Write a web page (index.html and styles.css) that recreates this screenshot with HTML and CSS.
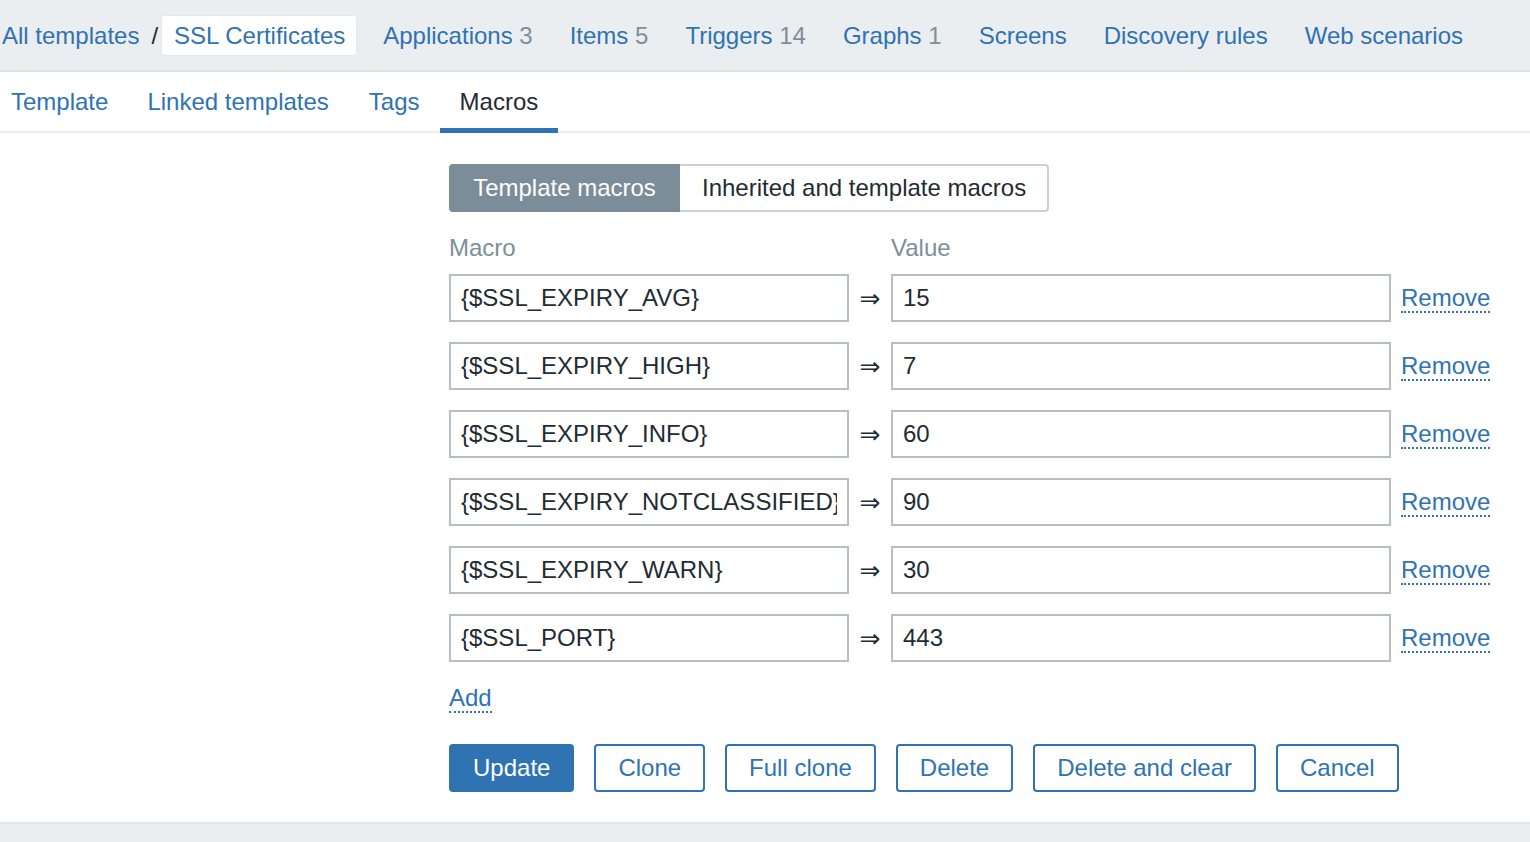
FILE: index.html
```html
<!DOCTYPE html>
<html lang="en">
<head>
<meta charset="utf-8">
<title>Macros</title>
<link rel="stylesheet" href="styles.css">
</head>
<body>
<header class="topnav">
  <div class="crumbs">
    <a class="crumb-link" href="#">All templates</a>
    <span class="crumb-sep">/</span>
    <a class="crumb-box" href="#">SSL Certificates</a>
  </div>
  <nav class="navlinks">
    <a href="#">Applications <span class="count">3</span></a>
    <a href="#">Items <span class="count">5</span></a>
    <a href="#">Triggers <span class="count">14</span></a>
    <a href="#">Graphs <span class="count">1</span></a>
    <a href="#">Screens</a>
    <a href="#">Discovery rules</a>
    <a href="#">Web scenarios</a>
  </nav>
</header>

<div class="tabs">
  <a class="tab first" href="#">Template</a>
  <a class="tab" href="#">Linked templates</a>
  <a class="tab" href="#">Tags</a>
  <a class="tab active" href="#">Macros</a>
</div>

<main class="content">
  <div class="segmented">
    <button class="seg on">Template macros</button>
    <button class="seg">Inherited and template macros</button>
  </div>

  <div class="macros">
    <div class="mrow head">
      <span class="label">Macro</span>
      <span></span>
      <span class="label">Value</span>
    </div>
    <div class="mrow">
      <input class="inp macro" value="{$SSL_EXPIRY_AVG}">
      <span class="arrow">⇒</span>
      <input class="inp value" value="15">
      <a class="dlink" href="#">Remove</a>
    </div>
    <div class="mrow">
      <input class="inp macro" value="{$SSL_EXPIRY_HIGH}">
      <span class="arrow">⇒</span>
      <input class="inp value" value="7">
      <a class="dlink" href="#">Remove</a>
    </div>
    <div class="mrow">
      <input class="inp macro" value="{$SSL_EXPIRY_INFO}">
      <span class="arrow">⇒</span>
      <input class="inp value" value="60">
      <a class="dlink" href="#">Remove</a>
    </div>
    <div class="mrow">
      <input class="inp macro" value="{$SSL_EXPIRY_NOTCLASSIFIED}">
      <span class="arrow">⇒</span>
      <input class="inp value" value="90">
      <a class="dlink" href="#">Remove</a>
    </div>
    <div class="mrow">
      <input class="inp macro" value="{$SSL_EXPIRY_WARN}">
      <span class="arrow">⇒</span>
      <input class="inp value" value="30">
      <a class="dlink" href="#">Remove</a>
    </div>
    <div class="mrow">
      <input class="inp macro" value="{$SSL_PORT}">
      <span class="arrow">⇒</span>
      <input class="inp value" value="443">
      <a class="dlink" href="#">Remove</a>
    </div>
  </div>

  <div class="addline"><a class="dlink" href="#">Add</a></div>

  <div class="actions">
    <button class="btn primary">Update</button>
    <button class="btn">Clone</button>
    <button class="btn">Full clone</button>
    <button class="btn">Delete</button>
    <button class="btn">Delete and clear</button>
    <button class="btn">Cancel</button>
  </div>
</main>

<footer class="footer"></footer>
</body>
</html>
```

FILE: styles.css
```css
* { box-sizing: border-box; }

html, body {
  margin: 0;
  padding: 0;
  background: #ffffff;
  font-family: "Liberation Sans", Arial, sans-serif;
  font-size: 24px;
  color: #1f2c33;
}

a { color: #2f73b3; text-decoration: none; }

.topnav {
  display: flex;
  align-items: center;
  height: 72px;
  background: #ebeef0;
  border-bottom: 2px solid #dfe4e7;
}

.crumbs {
  display: flex;
  align-items: center;
}

.crumb-link { padding: 2px 0 0 2px; line-height: 28px; }

.crumb-sep {
  margin: 0 3px 0 12px;
  padding-top: 2px;
  color: #1f2c33;
}

.crumb-box {
  display: block;
  height: 41px;
  line-height: 40px;
  padding: 0 11px 0 12px;
  background: #ffffff;
  border: 1px solid #e3e7ea;
  border-radius: 3px;
}

.navlinks {
  display: flex;
  gap: 37px;
  margin-left: 26px;
  padding-top: 2px;
}

.count { color: #7d8f99; }

.tabs {
  display: flex;
  height: 61px;
  border-bottom: 2px solid #ebeef0;
}

.tab {
  position: relative;
  display: block;
  padding: 0 20px;
  line-height: 59px;
}

.tab.first { padding: 0 19px 0 11px; }

.tab.active { color: #1f2c33; }

.tab.active::after {
  content: "";
  position: absolute;
  left: 0;
  right: 0;
  bottom: -2px;
  height: 5px;
  background: #2f73b3;
}

.content {
  padding: 31px 0 30px 449px;
}

.segmented {
  display: flex;
  height: 48px;
  width: 600px;
}

.seg {
  font-family: inherit;
  font-size: 24px;
  height: 48px;
  padding: 0 0 0 22px;
  margin: 0;
  background: #ffffff;
  color: #1f2c33;
  border: 2px solid #c9d2d7;
  border-left: none;
  border-radius: 0 4px 4px 0;
  flex: 1;
  text-align: left;
  white-space: nowrap;
}

.seg.on {
  flex: 0 0 231px;
  padding: 0;
  text-align: center;
  background: #7a8d99;
  border: 2px solid #7a8d99;
  color: #ffffff;
  border-radius: 4px 0 0 4px;
}

.macros {
  display: flex;
  flex-direction: column;
  gap: 20px;
  margin-top: 24px;
}

.mrow {
  display: flex;
  align-items: center;
}

.mrow.head {
  height: 24px;
  line-height: 24px;
  margin-bottom: -6px;
}

.label { color: #7d8f99; }

.mrow.head .label:first-child { width: 400px; }
.mrow.head span:nth-child(2) { width: 42px; }

.inp {
  height: 48px;
  padding: 0 10px;
  font-family: inherit;
  font-size: 24px;
  color: #1f2c33;
  border: 2px solid #b4c0c6;
  border-radius: 0;
  background: #ffffff;
  outline: none;
}

.inp.macro { width: 400px; }
.inp.value { width: 500px; }

.arrow {
  width: 42px;
  text-align: center;
  font-family: "DejaVu Sans", sans-serif;
  font-size: 25px;
  line-height: 28px;
  padding-top: 2px;
  color: #1f2c33;
}

.dlink {
  display: inline-block;
  line-height: 27px;
  padding-top: 1px;
  border-bottom: 2px dotted #2f73b3;
}

.mrow .dlink { margin-left: 10px; }

.addline {
  margin-top: 21px;
  height: 28px;
}

.actions {
  display: flex;
  gap: 20px;
  margin-top: 33px;
}

.btn {
  height: 48px;
  padding: 0 22px;
  font-family: inherit;
  font-size: 24px;
  color: #2f73b3;
  background: #ffffff;
  border: 2px solid #2f73b3;
  border-radius: 4px;
}

.btn.primary {
  background: #2f73b3;
  color: #ffffff;
}

.footer {
  height: 20px;
  background: #ebeef0;
  border-top: 2px solid #dfe4e7;
}
```
